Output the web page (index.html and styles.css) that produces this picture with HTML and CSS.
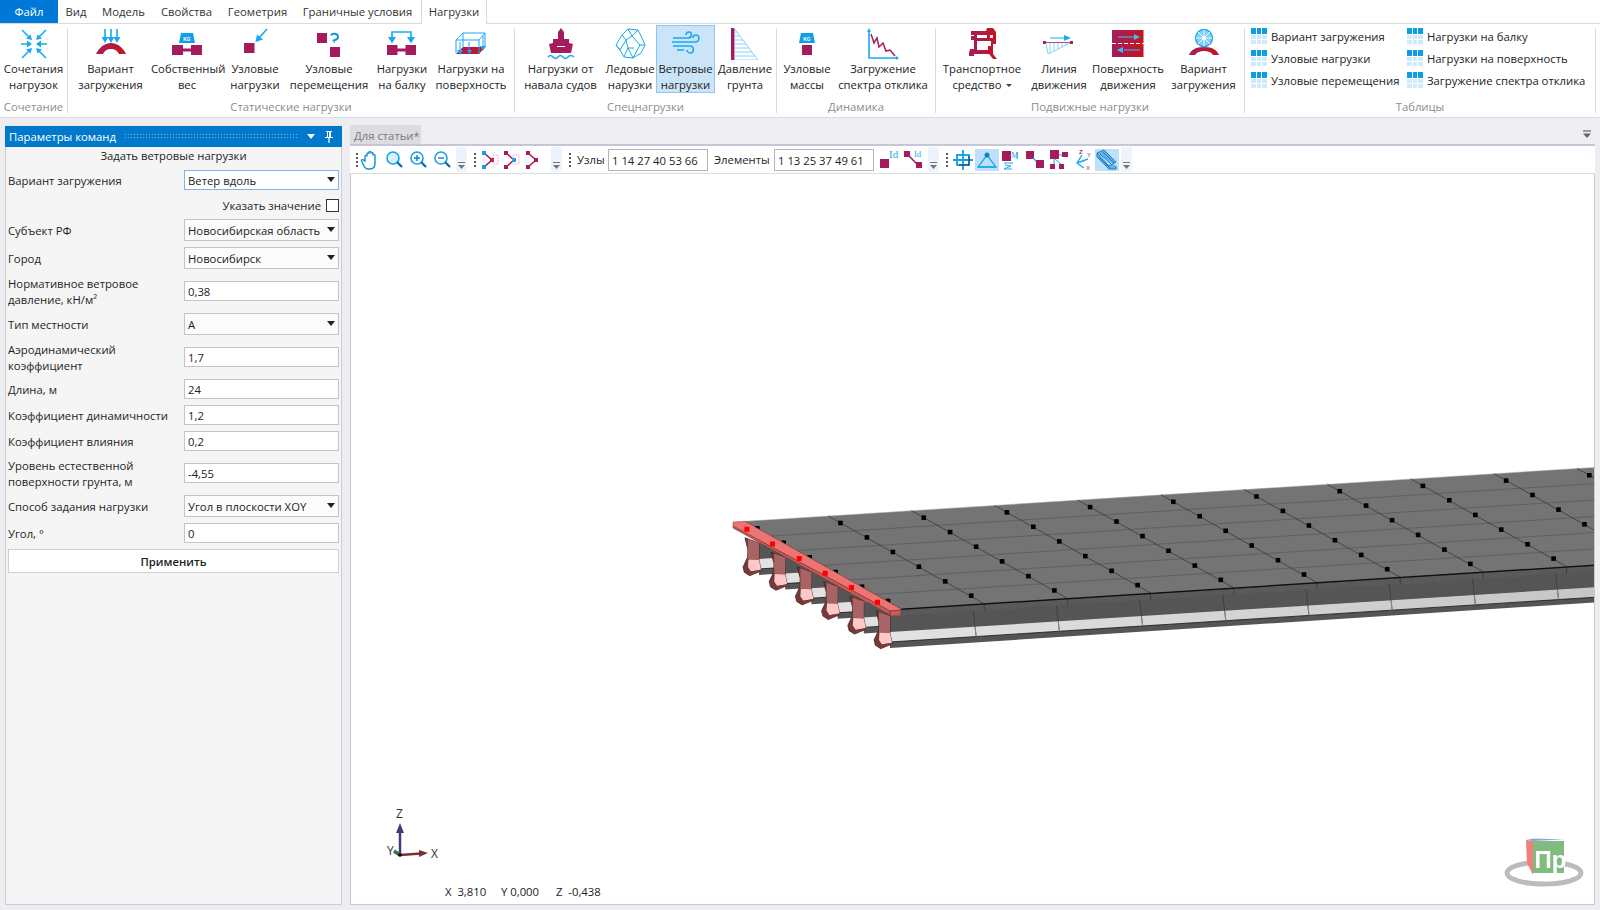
FILE: index.html
```html
<!DOCTYPE html>
<html lang="ru">
<head>
<meta charset="utf-8">
<title>Нагрузки</title>
<link rel="stylesheet" href="styles.css">
</head>
<body>
<svg class="defs" width="0" height="0">
  <defs>
    <linearGradient id="mg" x1="0" x2="1" y1="0" y2="0"><stop offset="0" stop-color="#a51c5e"/><stop offset="1" stop-color="#c4161f"/></linearGradient>
    <linearGradient id="lg" x1="0" x2="1" y1="0" y2="0"><stop offset="0" stop-color="#e2e2e2"/><stop offset="1" stop-color="#c4c4c4"/></linearGradient>
    <symbol id="grid" viewBox="0 0 16 16">
      <rect width="16" height="16" fill="#cfeafa"/>
      <rect width="16" height="6" fill="#0a9ee6"/>
      <path d="M0 6.5H16M0 11.5H16M5.5 0V16M10.5 0V16" stroke="#fff" stroke-width="1" fill="none"/>
    </symbol>
    <symbol id="over" viewBox="0 0 11 25">
      <path d="M2 15.5H9" stroke="#777" stroke-width="1"/><path d="M2 18H9L5.500 22Z" fill="#777"/>
    </symbol>
  </defs>
</svg>

<nav class="tabs">
  <div class="tab file">Файл</div>
  <div class="tab t36">Вид</div>
  <div class="tab t59">Модель</div>
  <div class="tab t67">Свойства</div>
  <div class="tab t75">Геометрия</div>
  <div class="tab t125">Граничные условия</div>
  <div class="tab active">Нагрузки</div>
</nav>

<section class="ribbon">
  <div class="group g67">
    <div class="btns">
      <div class="rbtn w67">
        <svg class="ico" viewBox="0 0 32 32"><g class="bl"><path d="M4 2L12 10M28 2L20 10M4 30L12 22M28 30L20 22M3 16H10M29 16H22"/></g><g class="bf"><path d="M14 12L8 10.500L12.500 6.500ZM18 12L24 10.500L19.500 6.500ZM14 20L8 21.500L12.500 25.500ZM18 20L24 21.500L19.500 25.500ZM14 16L9 12.500V19.500ZM18 16L23 12.500V19.500Z"/></g></svg>
        <span>Сочетания<br>нагрузок</span>
      </div>
    </div>
    <div class="glabel">Сочетание</div>
  </div>
  <div class="sep"></div>

  <div class="group g446">
    <div class="btns pl3">
      <div class="rbtn w79">
        <svg class="ico" viewBox="0 0 32 32"><path d="M1 26C4 20 9 15 16 15S28 20 31 26H24C22 22 19 21 16 21S10 22 8 26Z" fill="url(#mg)"/><g class="bl"><path d="M10 1V12M16 1V11M22 1V12"/></g><g class="bf"><path d="M6.500 9H13.500L10 15ZM12.500 9H19.500L16 15ZM18.500 9H25.500L22 15Z"/></g></svg>
        <span>Вариант<br>загружения</span>
      </div>
      <div class="rbtn w74">
        <svg class="ico" viewBox="0 0 32 32"><path d="M8 15L10 5H22L24 15Z" fill="#0f9fe8"/><text class="kg" x="16" y="12.500">KG</text><path class="mr" d="M1 17H12V20.500H20V17H31V27H20V23.500H12V27H1Z"/></svg>
        <span>Собственный<br>вес</span>
      </div>
      <div class="rbtn w62">
        <svg class="ico" viewBox="0 0 32 32"><rect class="mr" x="5" y="15" width="10.500" height="10"/><g class="bl"><path d="M28 1L20 10"/></g><path class="bf" d="M16.500 14L18 6.500L24 11.500Z"/></svg>
        <span>Узловые<br>нагрузки</span>
      </div>
      <div class="rbtn w86">
        <svg class="ico" viewBox="0 0 32 32"><rect class="mr" x="4" y="5" width="10" height="10"/><rect class="mr" x="17" y="19" width="10" height="10"/><g class="bl2"><path d="M18 7.500C19 5 25 5 25 9C25 11.500 22 12 21 12.500"/></g><path class="bf" d="M19 12.500L22 10.500V15Z"/></svg>
        <span>Узловые<br>перемещения</span>
      </div>
      <div class="rbtn w60">
        <svg class="ico" viewBox="0 0 32 32"><path class="mr" d="M1 17H11.500V20.500H19.500V17H30V27H19.500V23.500H11.500V27H1Z"/><g class="bl"><path d="M6 11V4H25V11"/></g><path class="bf" d="M2 9H10L6 15.500ZM21 9H29L25 15.500Z"/></svg>
        <span>Нагрузки<br>на балку</span>
      </div>
      <div class="rbtn w78">
        <svg class="ico" viewBox="0 0 32 32"><path d="M1 26L8 19H30L24 26Z" fill="url(#mg)"/><g class="bl1"><path d="M1 25V12L8 5H30V19M1 12H24L30 5M24 12V26M8 5V19M5 14V24M14 14V24M28 8V20"/></g><path class="bf" d="M2 22H8L5 27ZM25 18H31L28 23ZM12 22H17L14.500 26Z"/></svg>
        <span>Нагрузки на<br>поверхность</span>
      </div>
    </div>
    <div class="glabel">Статические нагрузки</div>
  </div>
  <div class="sep"></div>

  <div class="group g261">
    <div class="btns pl2">
      <div class="rbtn w87">
        <svg class="ico" viewBox="0 0 32 32"><path class="mr" d="M4 16L8 15V11H13V4L16 0L19 4V11H24V15L28 16L26 25H6ZM12 18V19H20V18Z"/><g class="bl"><path d="M3 29Q5.500 26 8 29T13 29T18 29T23 29T29 29"/></g></svg>
        <span>Нагрузки от<br>навала судов</span>
      </div>
      <div class="rbtn w52">
        <svg class="ico" viewBox="0 0 32 32"><g class="bl1"><path d="M2 17L8 7L14 1L24 2L28 10L31 17L27 25L19 30L10 29L6 22ZM14 1L18 8L12 12L8 7M18 8L24 2M18 8L26 17L31 17M26 17L19 30M12 12L6 22M12 12L14 20L10 29M14 20L19 30M2 17L6 22M14 20L20 20"/></g></svg>
        <span>Ледовые<br>нарузки</span>
      </div>
      <div class="rbtn w59 hot">
        <svg class="ico" viewBox="0 0 32 32"><g class="bl"><path d="M3 10H18C22 10 23 4 19 4C16.500 4 16 6 16 7M2 14H25C30 14 30 7 26 7C24 7 23 8.500 23 10M3 18H20C24 18 25 25 20 25C18 25 17 23 17 22M7 22H14"/></g></svg>
        <span>Ветровые<br>нагрузки</span>
      </div>
      <div class="rbtn w60">
        <svg class="ico" viewBox="0 0 32 32"><rect class="mr" x="2" y="0" width="3.500" height="32"/><g class="bl0"><path d="M5 0L29 32H5M5 4H8M5 8H11M5 12H14M5 16H17M5 20H20M5 24H23M5 28H26"/></g></svg>
        <span>Давление<br>грунта</span>
      </div>
    </div>
    <div class="glabel">Спецнагрузки</div>
  </div>
  <div class="sep"></div>

  <div class="group g158">
    <div class="btns">
      <div class="rbtn w60">
        <svg class="ico" viewBox="0 0 32 32"><path d="M8 15L10 5H22L24 15Z" fill="#0f9fe8"/><text class="kg" x="16" y="12.500">KG</text><rect class="mr" x="11" y="17" width="10" height="10"/></svg>
        <span>Узловые<br>массы</span>
      </div>
      <div class="rbtn w92">
        <svg class="ico" viewBox="0 0 32 32"><g class="bl"><path d="M2 2V30H31"/></g><path class="bf" d="M0 4L2 0L4 4ZM29 28L32 30L29 32Z"/><path d="M4 6L7 15L10 10L12 19L16 15L19 23L23 22L28 28" fill="none" stroke="#a51c5e" stroke-width="1.500"/></svg>
        <span>Загружение<br>спектра отклика</span>
      </div>
    </div>
    <div class="glabel">Динамика</div>
  </div>
  <div class="sep"></div>

  <div class="group g308">
    <div class="btns">
      <div class="rbtn w92">
        <svg class="ico" viewBox="0 0 32 32"><path d="M5 3H20L21 0H27L30 4V16H27V26L31 31H27L23 26H8V28H3V25L4 21H8V12H5V8H8V7H5ZM11 7V10H21V7ZM11 13V22H22V18H25V13ZM24 7V10H27V7Z" fill="url(#mg)"/></svg>
        <span>Транспортное<br>средство<i class="caret"></i></span>
      </div>
      <div class="rbtn w62">
        <svg class="ico" viewBox="0 0 32 32"><rect class="mr" x="0" y="13" width="3" height="3"/><rect class="mr" x="27" y="13" width="3" height="3"/><path d="M3 14.500H27" stroke="#a51c5e" stroke-width=".8"/><g class="bl0"><path d="M3 15L5 26L27 15M7 15V25M11 15V23M15 15V21M19 15V19M23 15V17"/></g><g class="bl1"><path d="M7 10H24"/></g><path class="bf" d="M21 7L28 10L21 13Z"/></svg>
        <span>Линия<br>движения</span>
      </div>
      <div class="rbtn w76">
        <svg class="ico" viewBox="0 0 32 32"><rect y="2" width="31.500" height="27" fill="url(#mg)"/><path d="M0 15.500H32" stroke="#fff" stroke-width="1" stroke-dasharray="4 2"/><g class="bl1b"><path d="M6 9H24M12 22H28"/></g><path d="M22 6L28 9L22 12ZM11 19L5 22L11 25Z" fill="#35c0ff"/></svg>
        <span>Поверхность<br>движения</span>
      </div>
      <div class="rbtn w75">
        <svg class="ico" viewBox="0 0 32 32"><path d="M1 27C3 22 7 19 16 19S29 22 31 27H25C23 24 20 23 16 23S9 24 7 27Z" fill="url(#mg)"/><circle cx="16" cy="10" r="8.500" fill="#7ed0f5" stroke="#1fa8ec" stroke-width="1.300"/><circle cx="16" cy="10" r="2" fill="#fff"/><path d="M16 2V18M8 10H24M10 4L22 16M22 4L10 16" stroke="#fff" stroke-width=".9"/></svg>
        <span>Вариант<br>загружения</span>
      </div>
    </div>
    <div class="glabel">Подвижные нагрузки</div>
  </div>
  <div class="sep"></div>

  <div class="group g350">
    <div class="tlist">
      <div class="titem"><svg class="gi"><use href="#grid"/></svg>Вариант загружения</div>
      <div class="titem"><svg class="gi"><use href="#grid"/></svg>Нагрузки на балку</div>
      <div class="titem"><svg class="gi"><use href="#grid"/></svg>Узловые нагрузки</div>
      <div class="titem"><svg class="gi"><use href="#grid"/></svg>Нагрузки на поверхность</div>
      <div class="titem"><svg class="gi"><use href="#grid"/></svg>Узловые перемещения</div>
      <div class="titem"><svg class="gi"><use href="#grid"/></svg>Загружение спектра отклика</div>
    </div>
    <div class="glabel">Таблицы</div>
  </div>
  <div class="sep"></div>
</section>

<main class="main">
  <aside class="panel">
    <header class="ptitle">
      <span>Параметры команд</span>
      <i class="dots"></i>
      <i class="ptri"></i>
      <svg class="ppin" viewBox="0 0 10 14"><path d="M2 1H8V2H7V7H9V8H5.600V13H4.400V8H1V7H3V2H2ZM4 2V7H5V2Z" fill="#fff"/></svg>
    </header>
    <div class="pcap">Задать ветровые нагрузки</div>
    <form class="form">
      <div class="row first"><label>Вариант загружения</label><div class="fld sel focus h20">Ветер вдоль</div></div>
      <div class="check"><span>Указать значение</span><i class="box"></i></div>
      <div class="row"><label>Субъект РФ</label><div class="fld sel h22">Новосибирская область</div></div>
      <div class="row"><label>Город</label><div class="fld sel h22">Новосибирск</div></div>
      <div class="row two"><label>Нормативное ветровое давление, кН/м²</label><div class="fld h20">0,38</div></div>
      <div class="row"><label>Тип местности</label><div class="fld sel h22">А</div></div>
      <div class="row two"><label>Аэродинамический коэффициент</label><div class="fld h20">1,7</div></div>
      <div class="row"><label>Длина, м</label><div class="fld h20">24</div></div>
      <div class="row"><label>Коэффициент динамичности</label><div class="fld h20">1,2</div></div>
      <div class="row"><label>Коэффициент влияния</label><div class="fld h20">0,2</div></div>
      <div class="row two"><label>Уровень естественной поверхности грунта, м</label><div class="fld h20">-4,55</div></div>
      <div class="row"><label>Способ задания нагрузки</label><div class="fld sel h22">Угол в плоскости XOY</div></div>
      <div class="row"><label>Угол, °</label><div class="fld h20">0</div></div>
      <div class="apply">Применить</div>
    </form>
  </aside>

  <section class="doc">
    <div class="dtabs">
      <div class="dtab">Для статьи*</div>
      <svg class="dfilter" viewBox="0 0 10 9"><path d="M1 1H9" stroke="#666" stroke-width="1.200"/><path d="M1 3.500H9L5 8Z" fill="#666"/></svg>
    </div>
    <div class="toolbar">
      <i class="grip"></i>
      <svg class="ti w22" viewBox="0 0 22 22"><path d="M5 12V7.500C5 6 7 6 7 7.500V5C7 3.500 9 3.500 9 5V3.500C9 2 11 2 11 3.500V4.500C11 3 13 3 13 4.500V6.500C13 5 15 5 15 6.500V14C15 18 13 20 10 20H8C6 20 5 19 4 17L1.500 12C1 10.500 3 10 4 11.500Z" fill="#fff" stroke="#0f8fd8" stroke-width="1.400"/></svg>
      <svg class="ti" viewBox="0 0 24 22"><circle cx="11" cy="9" r="6" fill="#d7f0fc" stroke="#17a2e8" stroke-width="1.600"/><path d="M15 13L20 18" stroke="#0a72b8" stroke-width="2.400"/></svg>
      <svg class="ti" viewBox="0 0 24 22"><circle cx="11" cy="9" r="6" fill="#fff" stroke="#17a2e8" stroke-width="1.600"/><path d="M8 9H14M11 6V12" stroke="#0f7fc8" stroke-width="1.400"/><path d="M15 13L20 18" stroke="#0a72b8" stroke-width="2.400"/></svg>
      <svg class="ti" viewBox="0 0 24 22"><circle cx="11" cy="9" r="6" fill="#fff" stroke="#17a2e8" stroke-width="1.600"/><path d="M8 9H14" stroke="#0f7fc8" stroke-width="1.400"/><path d="M15 13L20 18" stroke="#0a72b8" stroke-width="2.400"/></svg>
      <svg class="over ml2" viewBox="0 0 11 25"><use href="#over"/></svg>
      <i class="grip ml4"></i>
      <svg class="ti w22b" viewBox="0 0 22 22"><path d="M5 4L13 11L5 18" fill="none" stroke="#a51c5e" stroke-width="1.600"/><rect x="3" y="2" width="4" height="4" fill="#0f9fe8"/><rect x="3" y="16" width="4" height="4" fill="#0f9fe8"/><rect x="11" y="9" width="4" height="4" fill="#a51c5e"/><rect x="14" y="6" width="5" height="9" fill="none" stroke="#e88ab0" stroke-width=".7" stroke-dasharray="1.500 1"/></svg>
      <svg class="ti w22b" viewBox="0 0 22 22"><path d="M5 4L13 11L5 18" fill="none" stroke="#a51c5e" stroke-width="1.600"/><rect x="3" y="2" width="4" height="4" fill="#a51c5e"/><rect x="3" y="16" width="4" height="4" fill="#a51c5e"/><rect x="11" y="9" width="4" height="4" fill="#0f9fe8"/><rect x="12" y="6" width="6" height="9" fill="none" stroke="#e88ab0" stroke-width=".7" stroke-dasharray="1.500 1"/></svg>
      <svg class="ti w22b" viewBox="0 0 22 22"><path d="M5 4L13 11L5 18" fill="none" stroke="#a51c5e" stroke-width="1.600"/><rect x="3" y="2" width="4" height="4" fill="#a51c5e"/><rect x="3" y="16" width="4" height="4" fill="#a51c5e"/><rect x="11" y="9" width="4" height="4" fill="#a51c5e"/></svg>
      <svg class="over ml6" viewBox="0 0 11 25"><use href="#over"/></svg>
      <i class="grip ml4"></i>
      <span class="tlab w31">Узлы</span>
      <div class="tinput">1 14 27 40 53 66</div>
      <span class="tlab w60">Элементы</span>
      <div class="tinput">1 13 25 37 49 61</div>
      <svg class="ti ml3" viewBox="0 0 24 22"><rect x="3" y="10" width="9" height="9" fill="#a51c5e"/><text class="idt" x="12" y="9">Id</text></svg>
      <svg class="ti" viewBox="0 0 24 22"><path d="M6 5L17 16" stroke="#a51c5e" stroke-width="1.600"/><rect x="3" y="2" width="6" height="6" fill="#a51c5e"/><rect x="15" y="13" width="6" height="6" fill="#a51c5e"/><text class="idt sm" x="13" y="8">Id</text></svg>
      <svg class="over ml3" viewBox="0 0 11 25"><use href="#over"/></svg>
      <i class="grip ml4"></i>
      <svg class="ti" viewBox="0 0 24 22"><path d="M2 11H22M12 1V21" stroke="#0f9fe8" stroke-width="1.800"/><rect x="6" y="6" width="12" height="10" fill="none" stroke="#0f9fe8" stroke-width="1.800"/><path d="M18 7V16H8" stroke="#221a40" stroke-width=".8" fill="none"/></svg>
      <div class="ti on"><svg viewBox="0 0 22 22"><path d="M2 18L11 6L20 18Z" fill="none" stroke="#1fa8ec" stroke-width="1.300"/><path d="M2 18H20" stroke="#1fa8ec" stroke-width="1.500"/><circle cx="11" cy="6" r="2.500" fill="#0f7fc8"/></svg></div>
      <svg class="ti" viewBox="0 0 24 22"><rect x="3" y="2" width="9" height="10" fill="#a51c5e"/><text class="idt sm" x="12" y="9">M</text><path d="M5 14H14M6 16L12 17L5 20H13" stroke="#1fa8ec" stroke-width="1" fill="none"/><path d="M18 3V10" stroke="#1fa8ec"/></svg>
      <svg class="ti" viewBox="0 0 24 22"><rect x="3" y="2" width="8" height="8" fill="#a51c5e"/><rect x="13" y="11" width="8" height="8" fill="#a51c5e"/><path d="M10 9L13 12" stroke="#1fa8ec" stroke-width="1.200"/></svg>
      <svg class="ti" viewBox="0 0 24 22"><rect x="3" y="1" width="9" height="9" fill="#a51c5e"/><rect x="15" y="3" width="6" height="5" fill="#a51c5e"/><rect x="3" y="15" width="5" height="5" fill="#a51c5e"/><rect x="12" y="15" width="5" height="5" fill="#a51c5e"/><path d="M7 10V15M8 10L14 15M12 6H15" stroke="#1fa8ec"/></svg>
      <svg class="ti" viewBox="0 0 24 22"><path d="M11 6L6 14L13 19M6 14L17 10" stroke="#1fa8ec" stroke-width="1.400" fill="none"/><text class="axl zc" x="8" y="5">Z</text><text class="axl yc" x="16" y="8">Y</text><text class="axl xc" x="15" y="21">X</text></svg>
      <div class="ti on"><svg viewBox="0 0 22 22"><path d="M1 4L8 1L20 13L13 17ZM1 4V8L13 20H20V17M4 5L16 16M7 3L18 14M3 8L14 19" fill="#5fb4ea" stroke="#1377b8" stroke-width=".9"/></svg></div>
      <svg class="over ml2" viewBox="0 0 11 25"><use href="#over"/></svg>
    </div>
    <div class="canvas">
      <svg class="scene" viewBox="351 174 1243 730">
        <defs>
          <g id="beam">
            <path fill="#5a5a5a" d="M901 609L1640 562V569L901 616Z"/>
            <path fill="#555" d="M890 616L1640 568.400V585L890 633Z"/>
            <path fill="url(#lg)" d="M890 632L1640 584.400V594.400L890 642Z"/>
            <path fill="#555" d="M890 642L1640 594.400V599.400L890 648Z"/>
            <path stroke="#111" stroke-width=".8" d="M890 642L1640 594.400"/>
            <path fill="#743a3a" stroke="#3e1c1c" stroke-width=".7" d="M876 610.700L890 616V633L892 642.700V644L880.700 648.700L875.300 645.300L874 640L878.700 630V621.700L876.700 614Z"/>
            <path fill="#a86464" d="M879 612L890 616V633L879 632Z"/>
            <path fill="#ffc8c8" d="M879.500 632.500L890 633L892 642.700L882 644.500L879 640Z"/>
            <path fill="#7c3a3a" d="M880.700 648.700L881 644.500L892 642.700V644Z"/>
          </g>
          <rect id="bd" width="4.600" height="4.600" fill="#000"/>
          <g id="col">
            <path d="M745 521.300L901 609" stroke="#3a3a3a" stroke-width=".8"/>
            <use href="#bd" x="755" y="526"/><use href="#bd" x="781.400" y="540.400"/><use href="#bd" x="807.400" y="555"/><use href="#bd" x="833.400" y="569.700"/><use href="#bd" x="859.700" y="584.400"/><use href="#bd" x="885.700" y="598.700"/>
          </g>
          <g id="joint">
            <path d="M890 616L893 642" stroke="#3a3a3a" stroke-width=".8"/>
            <path d="M892 632L893 642" stroke="#8d8d8d" stroke-width=".8"/>
            <path d="M901 609V616" stroke="#3a3a3a" stroke-width=".8"/>
          </g>
        </defs>
        <use href="#beam" x="-131" y="-73"/>
        <use href="#beam" x="-104.800" y="-58.400"/>
        <use href="#beam" x="-78.600" y="-43.800"/>
        <use href="#beam" x="-52.400" y="-29.200"/>
        <use href="#beam" x="-26.200" y="-14.600"/>
        <use href="#beam"/>
        <use href="#joint" x="83.200" y="-5.300"/><use href="#joint" x="166.400" y="-10.600"/><use href="#joint" x="249.600" y="-15.900"/><use href="#joint" x="332.800" y="-21.200"/><use href="#joint" x="416" y="-26.500"/><use href="#joint" x="499.200" y="-31.800"/><use href="#joint" x="582.400" y="-37.100"/><use href="#joint" x="665.600" y="-42.400"/>
        <path fill="#747474" stroke="#b0b0b0" stroke-width=".5" d="M745 521.300L1640 464.500V562L901 609Z"/>
        <path fill="none" stroke="#525252" stroke-width=".6" d="M771 536L1640 480.700M797 550.600L1640 497M823 565.500L1640 513.500M849 580L1640 529.700M875 594.400L1640 546"/>
        <use href="#col"/><use href="#col" x="83.200" y="-5.300"/><use href="#col" x="166.400" y="-10.600"/><use href="#col" x="249.600" y="-15.900"/><use href="#col" x="332.800" y="-21.200"/><use href="#col" x="416" y="-26.500"/><use href="#col" x="499.200" y="-31.800"/><use href="#col" x="582.400" y="-37.100"/><use href="#col" x="665.600" y="-42.400"/><use href="#col" x="748.800" y="-47.700"/><use href="#col" x="832" y="-53"/>
        <path fill="#111" d="M901 608.500L1640 561.500V563L901 610Z"/>
        <path fill="#ec7472" stroke="#8a3c3c" stroke-width=".5" d="M733 522L745 521.300L901 609V610L890 611L733 526Z"/>
        <path fill="#c95a58" stroke="#6a2c2c" stroke-width=".5" d="M890 611L901 610V615L890 616ZM733 526L890 611V615L733 528Z"/>
        <path fill="#f00" d="M744.400 526.700h5v5h-5zM770 541.400h5v5h-5zM796.700 556h5v5h-5zM822.700 570.700h5v5h-5zM849 585h5v5h-5zM875 599.700h5v5h-5z"/>
        <path d="M400 855V830" stroke="#3c3c80" stroke-width="2.500"/>
        <path d="M396 833L400 823L404 833Z" fill="#3c3c80"/>
        <path d="M400 855L421 853.500" stroke="#7a3030" stroke-width="2.500"/>
        <path d="M419 850L428 853L419 857Z" fill="#7a3030"/>
        <path d="M394 851L400 855" stroke="#2f7a3a" stroke-width="3.500"/>
        <circle cx="400" cy="855" r="1.800" fill="#000"/>
        <text class="ax" x="396" y="818">Z</text>
        <text class="ax" x="431" y="858">X</text>
        <text class="ax" x="387" y="855">Y</text>
        <g class="logo">
          <ellipse cx="1544" cy="873" rx="37" ry="11" fill="#fff" stroke="#bcbcbc" stroke-width="5"/>
          <path d="M1526 840L1533 841V875L1527 863Z" fill="#ee7f7a"/>
          <path d="M1526 840L1534 838.500L1564 839.500L1533 841Z" fill="#8f9fe8"/>
          <rect x="1533" y="841" width="31" height="32" fill="#80bc80"/>
          <text class="lg" x="1534.500" y="868">Пр</text>
        </g>
      </svg>
      <div class="coords"><span class="cx">X&nbsp;&nbsp;3,810</span><span class="cy">Y&nbsp;0,000</span><span>Z&nbsp;&nbsp;-0,438</span></div>
    </div>
  </section>
</main>
</body>
</html>
```

FILE: styles.css
```css
* { box-sizing: border-box; }
html, body { margin: 0; padding: 0; }
body {
  width: 1600px; height: 910px; overflow: hidden;
  background: #eeeef2; color: #1e1e1e;
  font: 11.3px/16px "Open Sans", "Noto Sans", sans-serif;
}
.defs { position: absolute; }
i { font-style: normal; display: block; }

/* tabs */
.tabs { display: flex; height: 24px; background: #fff; border-bottom: 1px solid #d9d9d9; }
.tab { height: 24px; line-height: 23px; text-align: center; color: #333; }
.file { width: 58px; height: 23px; background: #0078d7; color: #fff; }
.t36 { width: 36px; } .t59 { width: 59px; } .t67 { width: 67px; }
.t75 { width: 75px; } .t125 { width: 125px; }
.active { width: 66px; margin-left: 1px; background: #fff; border: 1px solid #d9d9d9; border-width: 0 1px; }

/* ribbon */
.ribbon { display: flex; height: 94px; background: #fff; border-bottom: 1px solid #dcdce0; }
.sep { width: 1px; margin: 4px 0; background: #dcdcdc; }
.group { display: flex; flex-direction: column; }
.g67 { width: 67px; } .g446 { width: 446px; } .g261 { width: 261px; }
.g158 { width: 158px; } .g308 { width: 308px; } .g350 { width: 350px; }
.btns { display: flex; height: 68px; margin-top: 1px; }
.pl3 { padding-left: 3px; } .pl2 { padding-left: 2px; }
.rbtn { display: block; height: 68px; border: 1px solid transparent; text-align: center; white-space: nowrap; color: #222; }
.rbtn span { display: block; }
.ico { display: block; width: 32px; height: 32px; margin: 2px auto 1px; }
.hot { background: #cce4f7; border-color: #8cc6f4; }
.w67 { width: 67px; } .w79 { width: 79px; } .w74 { width: 74px; } .w62 { width: 62px; }
.w86 { width: 86px; } .w60 { width: 60px; } .w78 { width: 78px; } .w87 { width: 87px; }
.w52 { width: 52px; } .w59 { width: 59px; } .w92 { width: 92px; } .w76 { width: 76px; } .w75 { width: 75px; }
.glabel { height: 16px; margin-top: 6px; text-align: center; color: #8c8c8c; white-space: nowrap; }
.caret { display: inline-block; margin-left: 4px; vertical-align: 2px; border: 3px solid transparent; border-top-color: #444; border-bottom-width: 0; }
.tlist { display: grid; grid-template-columns: 156px 180px; grid-auto-rows: 22px; height: 68px; margin-top: 2px; margin-bottom: -1px; padding-left: 6px; }
.titem { display: flex; align-items: center; gap: 4px; white-space: nowrap; color: #222; }
.gi { width: 16px; height: 16px; flex: none; margin-top: -3px; }

/* icon paint */
.mr { fill: #a51c5e; }
.bf { fill: #16aaf4; }
.bl { fill: none; stroke: #16aaf4; stroke-width: 1.6; }
.bl2 { fill: none; stroke: #1692d8; stroke-width: 2; }
.bl1 { fill: none; stroke: #16aaf4; stroke-width: 1; }
.bl1b { fill: none; stroke: #35c0ff; stroke-width: 1.200; }
.bl0 { fill: none; stroke: #86d2f8; stroke-width: 1; }
.kg { font: bold 5px "Liberation Sans", sans-serif; fill: #fff; text-anchor: middle; }

/* layout */
.main { display: flex; gap: 8px; height: 792px; padding: 7px 5px 5px; }

/* panel */
.panel { width: 337px; margin-top: 1px; background: #f5f5f5; border: 1px solid #ccccd4; border-top: 0; }
.ptitle { display: flex; align-items: center; height: 21px; margin: 0 -1px; padding: 0 8px 0 4px; background: #0079cc; color: #fff; }
.dots { flex: 1; height: 7px; margin: 0 8px; background-image: radial-gradient(circle, rgba(255,255,255,.5) .6px, transparent .8px); background-size: 3px 3px; }
.ptri { width: 0; height: 0; border: 4px solid transparent; border-top: 5px solid #fff; border-bottom: 0; margin-right: 9px; }
.ppin { width: 10px; height: 14px; }
.pcap { height: 18px; line-height: 18px; text-align: center; }
.form { display: flex; flex-direction: column; gap: 6px; padding: 5px 2px 0; }
.row { display: flex; align-items: center; justify-content: space-between; }
.row label { display: block; width: 170px; padding-top: 1px; }
.row.first { margin-bottom: 3px; }
.two { height: 32px; }
.fld { position: relative; width: 155px; padding: 1px 0 0 3px; background: #fff; border: 1px solid #c4c4c4; white-space: nowrap; color: #222; }
.h20 { height: 20px; line-height: 17px; }
.h22 { height: 22px; line-height: 19px; }
.sel { background: #fbfbfb; }
.sel::after { content: ""; position: absolute; right: 3px; top: 50%; margin-top: -3px; border: 4px solid transparent; border-top: 5px solid #222; border-bottom: 0; }
.focus { border-color: #7eb4ea; background: #fff; }
.check { display: flex; justify-content: flex-end; align-items: center; gap: 5px; height: 13px; margin-bottom: 1px; }
.box { width: 13px; height: 13px; background: #fff; border: 1px solid #333; }
.apply { height: 24px; line-height: 23px; text-align: center; background: #fff; border: 1px solid #d0d0d0; font-weight: 600; }

/* doc */
.doc { display: flex; flex-direction: column; flex: 1; min-width: 0; }
.dtabs { display: flex; align-items: center; justify-content: space-between; height: 19px; }
.dtab { width: 71px; height: 19px; line-height: 21px; padding-left: 4px; background: #dcdce2; color: #7a7a7a; white-space: nowrap; }
.dfilter { width: 10px; height: 9px; margin-right: 3px; }
.toolbar { display: flex; align-items: center; height: 30px; padding-left: 3px; background: #fff; border-top: 2px solid #c6c6d6; border-bottom: 1px solid #dcdcdc; }
.grip { width: 8px; height: 16px; background-image: radial-gradient(circle, #555 1px, transparent 1.300px); background-size: 8px 4px; }
.ti { display: block; flex: none; width: 24px; height: 22px; }
.w22 { width: 22px; margin-left: -1px; } .w22b { width: 22px; }
.on { background: #bfe0fb; }
.on svg { display: block; width: 22px; height: 22px; margin: 0 1px; }
.over { display: block; flex: none; width: 11px; height: 25px; background: #edf4fc; border-radius: 2px; }
.ml2 { margin-left: 2px; } .ml3 { margin-left: 3px; } .ml4 { margin-left: 4px; } .ml6 { margin-left: 6px; }
.tlab { flex: none; padding-top: 1px; white-space: nowrap; }
.w31 { width: 31px; margin-left: 3px; }
.toolbar .w60 { width: 60px; margin-left: 6px; }
.tinput { flex: none; width: 100px; height: 22px; padding: 1px 0 0 3px; line-height: 19px; border: 1px solid #b4b4b4; white-space: nowrap; }
.idt { font: 11px "Liberation Serif", serif; fill: #1fa8ec; }
.idt.sm { font-size: 8.500px; }
.axl { font: bold 6px "Liberation Sans", sans-serif; }
.zc { fill: #a51c5e; } .yc { fill: #c9729a; } .xc { fill: #c9729a; }

/* canvas */
.canvas { position: relative; flex: 1; background: #fff; border: 1px solid #c8c8d0; border-top: 0; }
.scene { position: absolute; left: 0; top: 0; width: 1243px; height: 730px; }
.ax { font: 12px "Open Sans", sans-serif; fill: #333; }
.lg { font: bold 24px "Liberation Sans", sans-serif; fill: #fff; }
.logo { filter: blur(.5px); }
.coords { position: absolute; left: 94px; top: 710px; display: flex; color: #222; white-space: nowrap; }
.cx { width: 56px; } .cy { width: 55px; }
```
